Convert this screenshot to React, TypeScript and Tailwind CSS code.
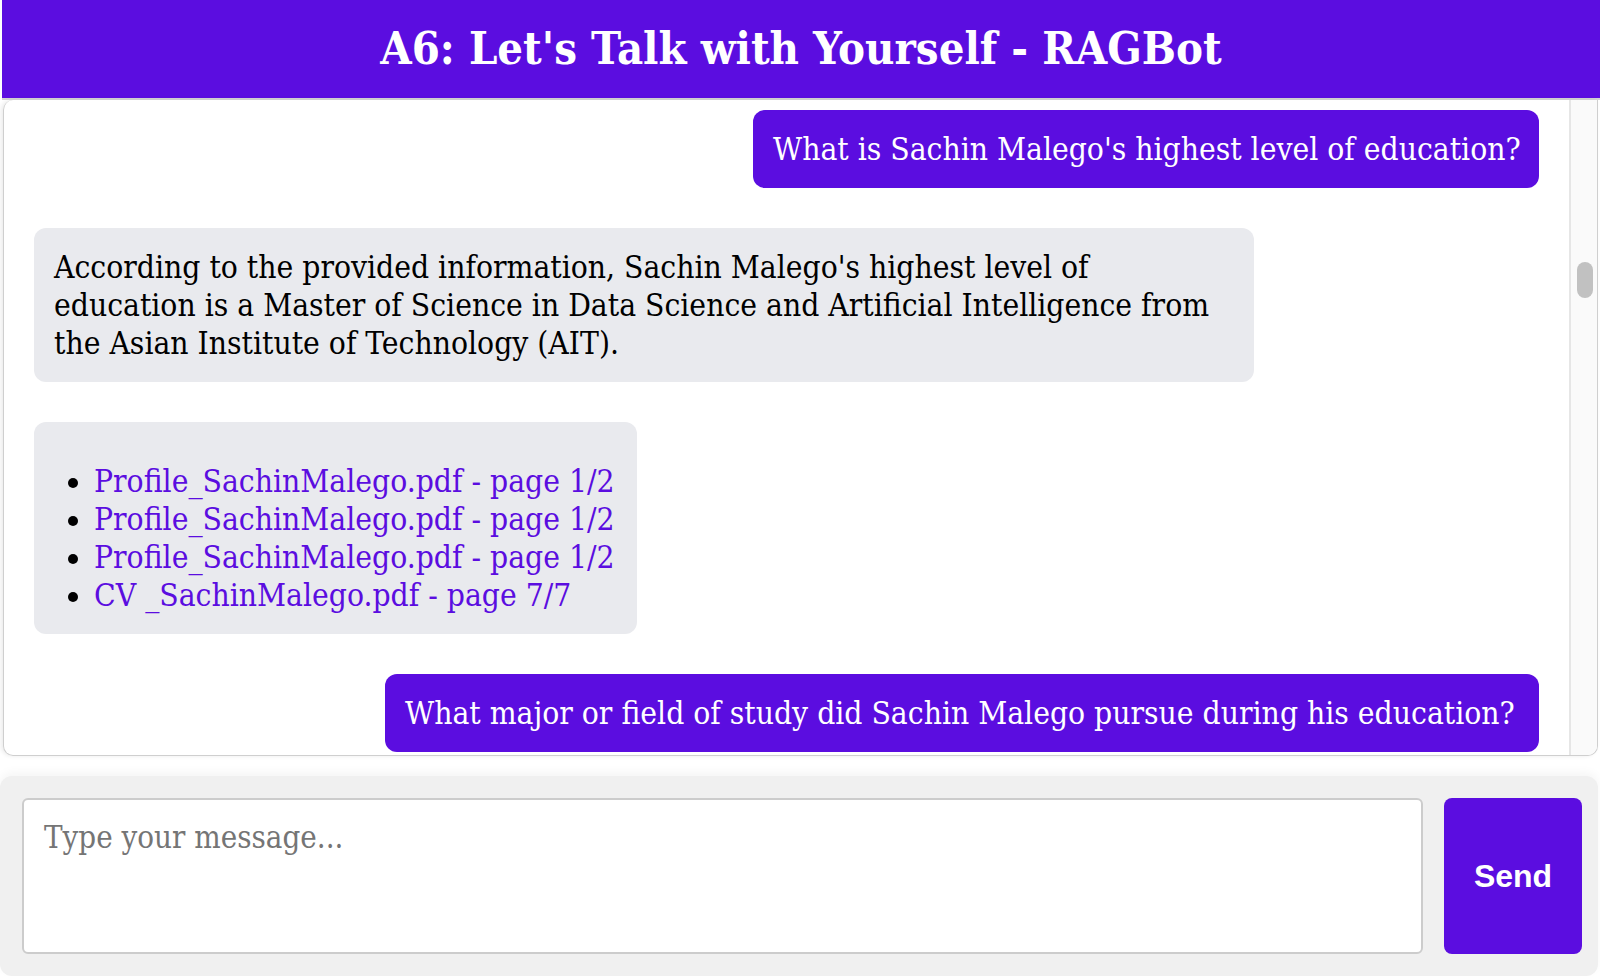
import React from "react";

const serif = "font-['DejaVu_Serif',serif] [font-stretch:condensed]";

const sources = [
  "Profile_SachinMalego.pdf - page 1/2",
  "Profile_SachinMalego.pdf - page 1/2",
  "Profile_SachinMalego.pdf - page 1/2",
  "CV _SachinMalego.pdf - page 7/7",
];

function UserBubble({ text, width }: { text: string; width: string }) {
  return (
    <div className="flex justify-end">
      <div className={`${width} rounded-[12px] bg-[#5b0de0] px-5 py-5 text-[31.5px] leading-[38px] text-white whitespace-nowrap`}>
        {text}
      </div>
    </div>
  );
}

export default function App() {
  return (
    <div className={`flex h-screen w-full flex-col bg-white ${serif}`}>
      {/* header */}
      <div className="ml-[2px] flex h-[100px] shrink-0 items-center justify-center border-b-2 border-[#d4d4d4] bg-[#5b0de0]">
        <h1 className="text-[45px] font-bold text-white">A6: Let's Talk with Yourself - RAGBot</h1>
      </div>

      {/* chat box */}
      <div className="ml-[3px] mr-[2px] flex min-h-0 flex-1 overflow-hidden rounded-b-[10px] rounded-tl-[10px] border border-t-0 border-[#cfcfcf] shadow-[-2px_0_4px_rgba(0,0,0,0.08)]">
        <div className="flex flex-1 flex-col gap-10 overflow-hidden pl-[30px] pr-[30px] pt-[10px] text-black">
          <UserBubble width="w-[786px]" text="What is Sachin Malego's highest level of education?" />

          <div className="w-[1220px] rounded-[12px] bg-[#e9eaee] px-5 py-5 text-[31.5px] leading-[38px]">
            <span className="block">According to the provided information, Sachin Malego's highest level of</span>
            <span className="block">education is a Master of Science in Data Science and Artificial Intelligence from</span>
            <span className="block">the Asian Institute of Technology (AIT).</span>
          </div>

          <div className="w-[603px] rounded-[12px] bg-[#e9eaee] px-5 pb-5 pt-5 text-[31.5px] leading-[38px]">
            <ul className="mt-5 list-disc pl-10">
              {sources.map((s, i) => (
                <li key={i}>
                  <a className="text-[#5b0de0]">{s}</a>
                </li>
              ))}
            </ul>
          </div>

          <UserBubble
            width="w-[1154px]"
            text="What major or field of study did Sachin Malego pursue during his education?"
          />
        </div>

        {/* scrollbar */}
        <div className="w-[28px] shrink-0 border-l-2 border-[#e6e6e6] bg-[#fafafa] pl-[6px] pt-[162px]">
          <div className="h-[36px] w-[16px] rounded-full bg-[#c1c1c1]"></div>
        </div>
      </div>

      {/* input panel */}
      <div className="mr-[2px] mt-5 flex h-[200px] shrink-0 gap-[21px] rounded-[12px] bg-[#f0f0f0] pb-[22px] pl-[22px] pr-[16px] pt-[22px] shadow-[0_-4px_10px_rgba(0,0,0,0.04)]">
        <textarea
          placeholder="Type your message..."
          className="h-full flex-1 resize-none rounded-[6px] border-2 border-[#cccccc] bg-white px-5 py-[18px] text-[31px] leading-[38px] placeholder:text-[#757575] outline-none"
        />
        <button className="h-full w-[138px] rounded-[8px] bg-[#5b0de0] font-['Liberation_Sans',Arial,sans-serif] text-[32px] font-bold text-white [font-stretch:normal]">
          Send
        </button>
      </div>
    </div>
  );
}
